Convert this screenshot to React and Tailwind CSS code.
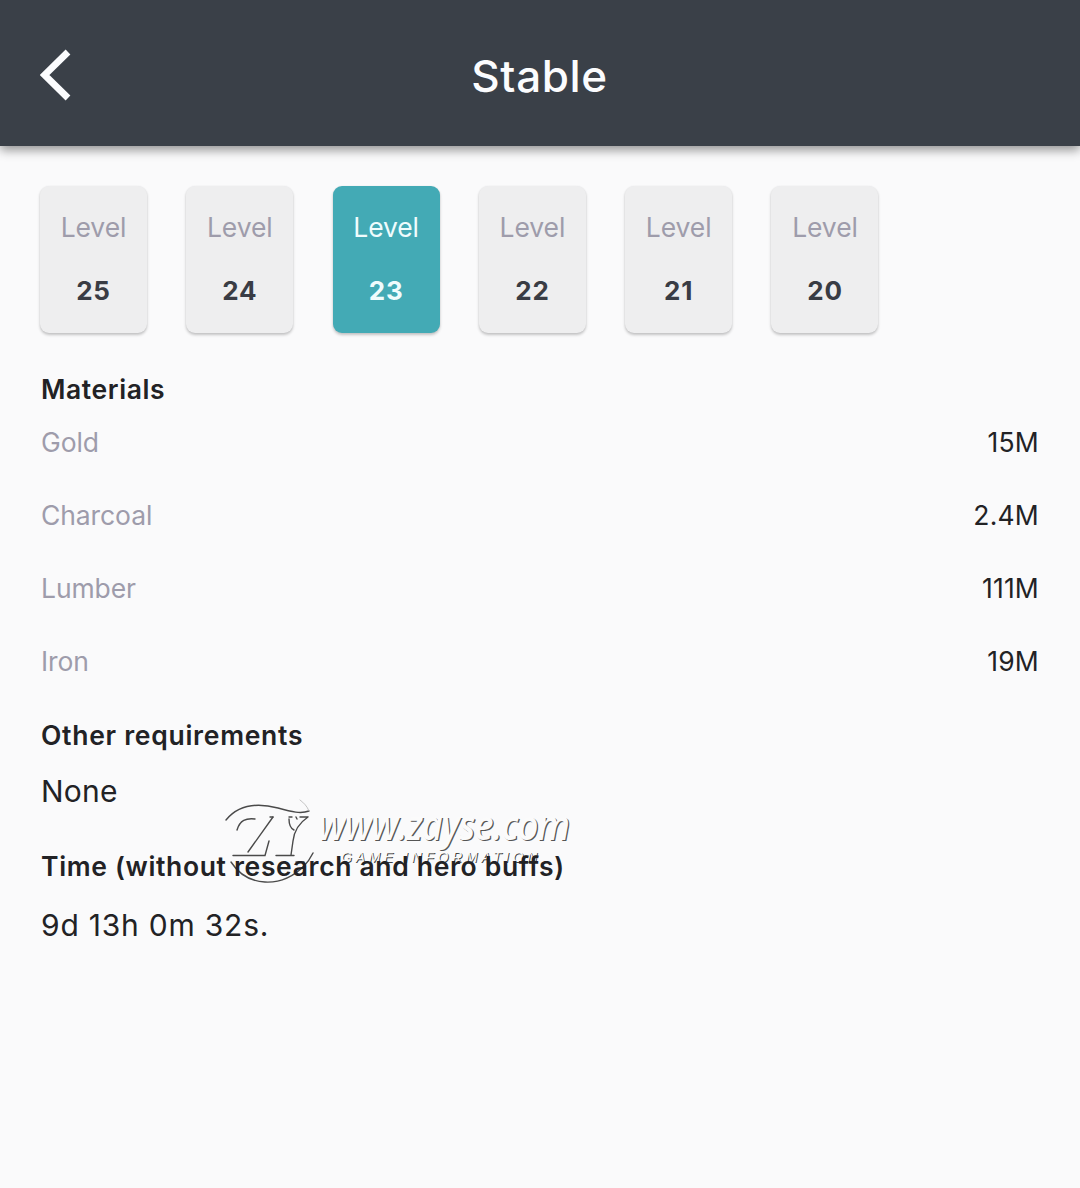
const levels = [25, 24, 23, 22, 21, 20];

const materials = [
  ["Gold", "15M"],
  ["Charcoal", "2.4M"],
  ["Lumber", "111M"],
  ["Iron", "19M"],
];

function LevelCard({ level, active }) {
  return (
    <button
      className={
        "flex h-[147px] w-[107px] shrink-0 flex-col items-center rounded-[9px] pt-[25px] shadow-[0_2px_3px_rgba(0,0,0,0.22),0_0_2px_rgba(0,0,0,0.06)] " +
        (active ? "bg-[#43aab5]" : "bg-[#eeeeef]")
      }
    >
      <span
        className={
          "text-[26.5px] leading-[33px] tracking-[-0.1px] " +
          (active ? "text-[#effcfd]" : "text-[#9e9cab]")
        }
      >
        Level
      </span>
      <span
        className={
          "mt-[30px] text-[26px] font-bold leading-[34px] tracking-[0.8px] " +
          (active ? "text-[#effcfd]" : "text-[#393c44]")
        }
      >
        {level}
      </span>
    </button>
  );
}

function Watermark() {
  return (
    <div className="pointer-events-none absolute left-[220px] top-[795px] h-[92px] w-[356px] select-none">
      <svg className="absolute left-0 top-0" width="100" height="92" viewBox="0 0 100 92" fill="none">
        <g stroke="#4a4a4a" strokeWidth="1.4" strokeLinecap="round">
          <path d="M6 25C19 9 39 8 58 13C72 17 81 19 89 16" />
          <path d="M89 16C87 11 84 8 80 5" stroke="#b5b5b5" strokeWidth="0.8" />
          <path d="M17 35C20 25 26 23 35 24" />
          <path d="M53 22L28 57M49 46L45 60.500H13" />
          <path d="M50 22H53" />
          <path d="M69 24C69 29 70 33 74 35M69 22H72M76 22L77 24" />
          <path d="M88 22C79 28 74 37 73 46L71 60M80 22H88M56 60.500H74" />
          <path d="M11 67C27 92 61 94 84 71C89 66 91 62 93 58M76 67L84 67" />
        </g>
      </svg>
      <div className="absolute left-[98px] top-[7px] origin-left scale-x-[0.89] whitespace-nowrap font-['Open_Sans','Noto_Sans',sans-serif] text-[41px] font-semibold italic leading-[44px] tracking-[-1.100px] text-[#fbfbfb] [text-shadow:1.400px_1.200px_0.500px_#555]">
        www.zayse.com
      </div>
      <div className="absolute left-[121px] top-[54px] whitespace-nowrap font-['Liberation_Sans',sans-serif] text-[14px] italic leading-[16px] tracking-[3.600px] text-[#fafafa] [text-shadow:1px_1px_0.500px_#444]">
        GAME INFORMATION
      </div>
    </div>
  );
}

export default function App() {
  return (
    <main className="relative flex h-[1188px] w-[1080px] flex-col overflow-hidden bg-[#fafafb] font-['Inter',sans-serif] text-[#222225]">
      <Watermark />
      <header className="grid h-[146px] shrink-0 grid-cols-[1fr_auto_1fr] items-center bg-[#3a4048] px-[40px] pt-[5px] shadow-[0_4px_10px_rgba(0,0,0,0.42)]">
        <svg className="-mt-px" width="32" height="52" viewBox="0 0 32 52" fill="none" aria-label="Back">
          <path d="M28 3L4.500 26L28 49" stroke="#fbfcfe" strokeWidth="6.800" />
        </svg>
        <h1 className="-ml-px text-[44px] font-medium leading-[56px] tracking-[0.6px] text-[#fbfcfe]">Stable</h1>
      </header>

      <section className="flex gap-[39.300px] px-[40px] pt-[40px]">
        {levels.map((level) => (
          <LevelCard key={level} level={level} active={level === 23} />
        ))}
      </section>

      <section className="relative flex flex-col px-[41px] pt-[39px]">
        <h2 className="text-[26.500px] font-semibold leading-[34px] tracking-[0.600px]">Materials</h2>
        <dl className="mt-[19px] flex flex-col gap-[39px]">
          {materials.map(([name, amount]) => (
            <div key={name} className="flex justify-between text-[26.500px] leading-[34px]">
              <dt className="tracking-[-0.100px] text-[#9e9cab]">{name}</dt>
              <dd className="tracking-[0.200px]">{amount}</dd>
            </div>
          ))}
        </dl>
        <h2 className="mt-[40px] text-[26.500px] font-semibold leading-[34px] tracking-[0.720px]">Other requirements</h2>
        <p className="mt-[20px] text-[30px] leading-[38px] tracking-[0.200px]">None</p>
        <h2 className="mt-[39px] text-[26.500px] font-semibold leading-[34px] tracking-[0.660px]">
          Time (without research and hero buffs)
        </h2>
        <p className="mt-[23px] text-[30px] leading-[38px] tracking-[0.780px]">9d 13h 0m 32s.</p>
      </section>
    </main>
  );
}
